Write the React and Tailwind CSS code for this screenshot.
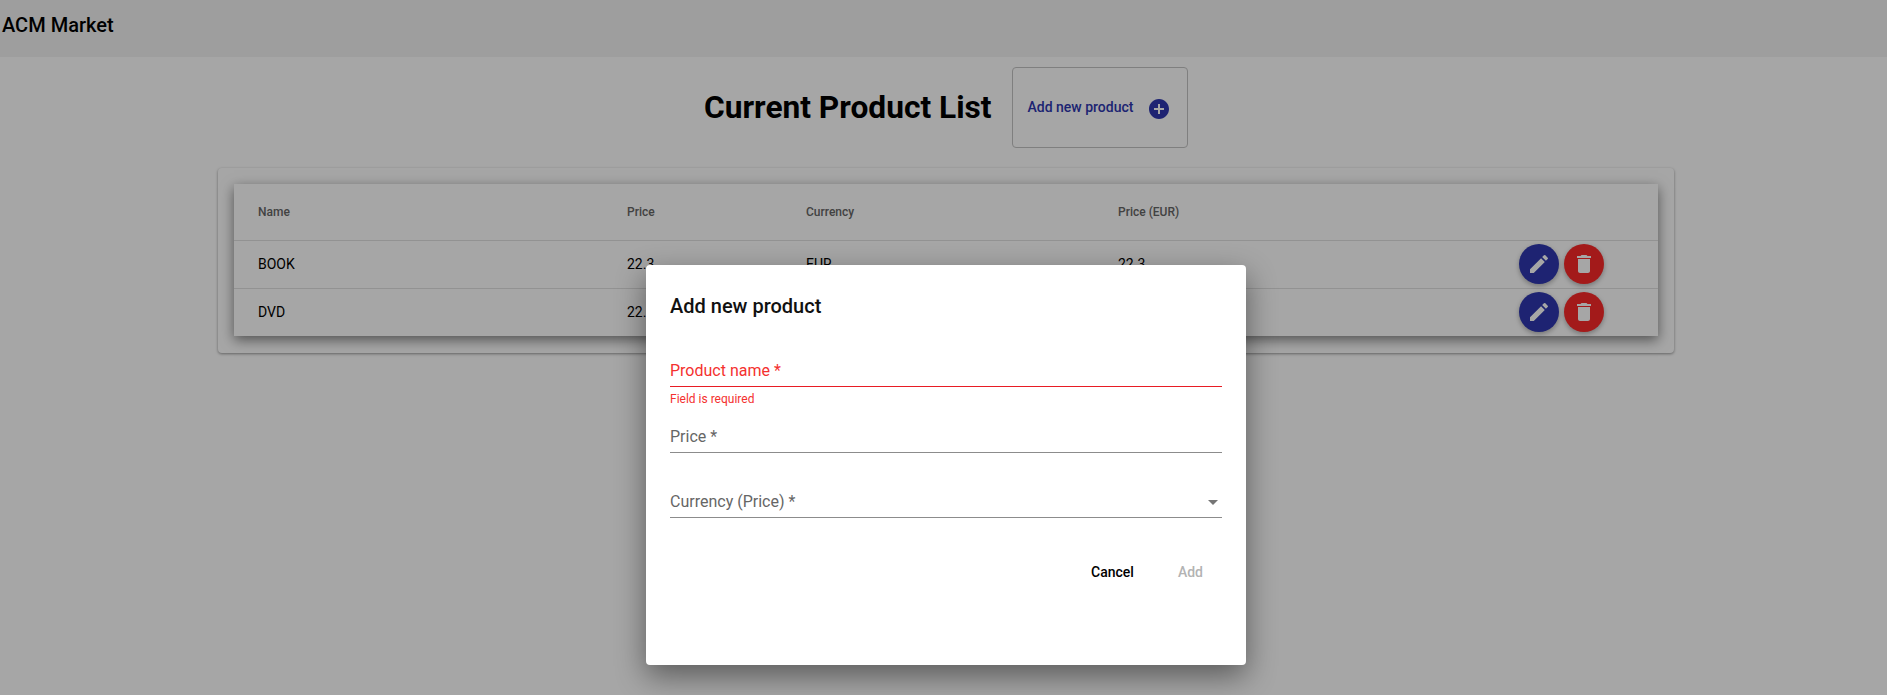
import React from "react";

const font = { fontFamily: "Roboto, sans-serif" };

function Pencil() {
  return (
    <svg viewBox="0 0 24 24" className="w-6 h-6" fill="#fff">
      <path d="M3 17.25V21h3.75L17.81 9.94l-3.75-3.75L3 17.25zM20.71 7.04a1 1 0 0 0 0-1.41l-2.34-2.34a1 1 0 0 0-1.41 0l-1.83 1.83 3.75 3.75 1.83-1.83z" />
    </svg>
  );
}

function Trash() {
  return (
    <svg viewBox="0 0 24 24" className="w-6 h-6" fill="#fff">
      <path d="M6 19c0 1.1.9 2 2 2h8c1.1 0 2-.9 2-2V7H6v12zM19 4h-3.5l-1-1h-5l-1 1H5v2h14V4z" />
    </svg>
  );
}

function Row({ name, price, currency, eur }) {
  return (
    <tr className="h-12 border-t border-[#e0e0e0] text-[14px] text-black">
      <td className="pl-6">{name}</td>
      <td>{price}</td>
      <td>{currency}</td>
      <td>{eur}</td>
      <td>
        <div className="flex justify-end gap-[5px] pr-[54px]">
          <button className="w-10 h-10 rounded-full bg-[#2e37af] flex items-center justify-center shadow-[0_2px_5px_rgba(0,0,0,0.3)]">
            <Pencil />
          </button>
          <button className="w-10 h-10 rounded-full bg-[#fb2929] flex items-center justify-center shadow-[0_2px_5px_rgba(0,0,0,0.3)]">
            <Trash />
          </button>
        </div>
      </td>
    </tr>
  );
}

function Field({ label, error, children }) {
  return (
    <div className="flex flex-col">
      <div className={`h-[32px] flex items-center justify-between text-[16px] border-b ${error ? "border-[#e81c24] text-[#f4312f]" : "border-[#8c8c8c] text-[#666666]"}`}>
        <span>{label}</span>
        {children}
      </div>
    </div>
  );
}

export default function App() {
  return (
    <div className="relative h-[695px] w-full overflow-hidden bg-white" style={font}>
      <header className="h-[57px] bg-[#f3f3f3] flex items-start pl-[2px] pt-[11px] text-[20px] font-medium leading-[28px] text-black">
        ACM Market
      </header>

      <div className="flex items-center h-[91px] pt-[10px] pl-[704px] gap-5">
        <h1 className="text-[31.7px] font-bold leading-[40px] text-black">Current Product List</h1>
        <button className="w-[176px] h-[81px] border border-[#c4c4c4] rounded flex items-center pl-[15px] text-[14px] font-medium text-[#2e37af]">
          <span>Add new product</span>
          <svg viewBox="0 0 24 24" className="w-6 h-6 ml-[14px] mt-[2px]" fill="#2e37af">
            <path d="M12 2C6.48 2 2 6.48 2 12s4.48 10 10 10 10-4.48 10-10S17.52 2 12 2zm5 11h-4v4h-2v-4H7v-2h4V7h2v4h4v2z" />
          </svg>
        </button>
      </div>

      <section className="ml-[218px] w-[1456px] mt-[20px] h-[185px] rounded p-4 bg-white shadow-[0_1px_3px_rgba(0,0,0,0.4)]">
        <table className="w-full bg-white border-collapse table-fixed shadow-[0_4px_12px_rgba(0,0,0,0.5)]">
          <colgroup>
            <col className="w-[393px]" />
            <col className="w-[179px]" />
            <col className="w-[312px]" />
            <col className="w-[285px]" />
            <col />
          </colgroup>
          <thead>
            <tr className="h-[56px] text-left text-[12px] font-medium text-[#666666]">
              <th className="pl-6 font-medium">Name</th>
              <th className="font-medium">Price</th>
              <th className="font-medium">Currency</th>
              <th className="font-medium">Price (EUR)</th>
              <th />
            </tr>
          </thead>
          <tbody>
            <Row name="BOOK" price="22.3" currency="EUR" eur="22.3" />
            <Row name="DVD" price="22.3" currency="EUR" eur="22.3" />
          </tbody>
        </table>
      </section>

      <div className="absolute inset-0 bg-black/35 flex justify-center items-start pt-[265px] pl-[5px]">
        <div className="w-[600px] h-[400px] bg-white rounded px-6 pt-[24px] flex flex-col shadow-[0_11px_30px_rgba(0,0,0,0.45)]">
          <h2 className="text-[20px] font-medium leading-[32px] text-[#111111] mt-[1px]">Add new product</h2>
          <div className="mt-[33px]">
            <Field label="Product name *" error />
            <p className="mt-[5px] text-[12px] leading-[14px] text-[#f4312f]">Field is required</p>
          </div>
          <div className="mt-[15px]">
            <Field label="Price *" />
          </div>
          <div className="mt-[33px]">
            <Field label="Currency (Price) *">
              <svg viewBox="0 0 24 24" className="w-6 h-6 mr-[-3px]" fill="#757575">
                <path d="M7 10l5 5 5-5z" />
              </svg>
            </Field>
          </div>
          <div className="flex justify-end mt-[44px] text-[14px] font-medium">
            <span className="mr-[44px] text-black">Cancel</span>
            <span className="mr-[19px] text-[#b3b3b3]">Add</span>
          </div>
        </div>
      </div>
    </div>
  );
}
